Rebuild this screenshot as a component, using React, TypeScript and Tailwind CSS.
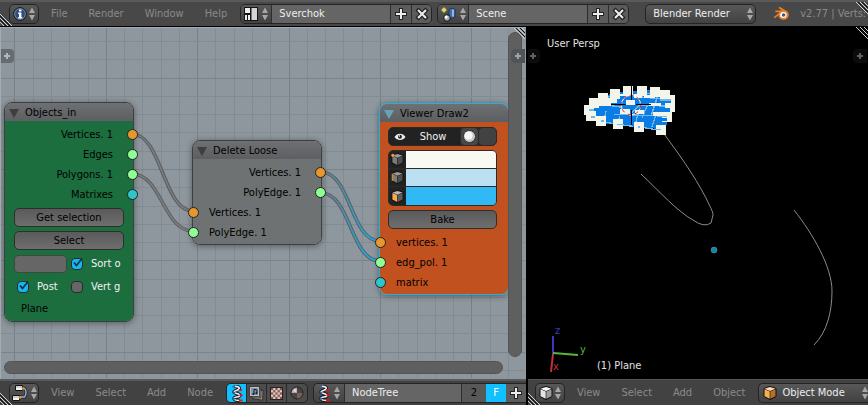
import React from "react";

const MENU = "bg-linear-to-b from-[#585858] to-[#424242]";
const PUSH = "bg-linear-to-b from-[#5a5a5a] to-[#6e6e6e]";

function Arrows({ color = "#a6a6a6" }: { color?: string }) {
  return (
    <svg width="6" height="14" viewBox="0 0 6 14" fill={color} aria-hidden="true">
      <path d="M3 0.5 6 6H0ZM3 13.5 6 8H0Z" />
    </svg>
  );
}

function Plus() {
  return (
    <svg width="14" height="14" viewBox="0 0 14 14" aria-hidden="true">
      <path d="M7 1v12M1 7h12" stroke="#222" strokeWidth="4" />
      <path d="M7 2v10M2 7h10" stroke="#eee" strokeWidth="2" />
    </svg>
  );
}

function Cross() {
  return (
    <svg width="14" height="14" viewBox="0 0 14 14" aria-hidden="true">
      <path d="M2 2l10 10M12 2 2 12" stroke="#222" strokeWidth="4.5" />
      <path d="M3 3l8 8M11 3l-8 8" stroke="#eee" strokeWidth="2" />
    </svg>
  );
}

function InfoIcon() {
  return (
    <svg width="14" height="14" viewBox="0 0 14 14" aria-hidden="true">
      <circle cx="7" cy="7" r="6.3" fill="#2f4d80" stroke="#101010" />
      <circle cx="7" cy="7" r="5.4" fill="none" stroke="#8fa5c8" strokeWidth="0.7" />
      <path d="M6 2.5h2.4v2H6zM5 5.5h3.4v4.7h1v1.3H5v-1.3h1V6.8H5z" fill="#fff" />
    </svg>
  );
}

function LayoutIcon() {
  return (
    <svg width="14" height="14" viewBox="0 0 14 14" aria-hidden="true">
      <path d="M0 0h14v14H0z" fill="#151515" />
      <path d="M1 1h5v5H1zM1 8h2v5H1zM4 8h2v5H4z" fill="#eee" />
      <path d="M7.5 1H13v12H7.5z" fill="#d5d5d5" />
    </svg>
  );
}

function SceneIcon() {
  return (
    <svg width="15" height="15" viewBox="0 0 15 15" aria-hidden="true">
      <path d="M8 3.5c0-3 6-3 6 0v6c0 2-6 2-6 0z" fill="#3c6fb8" stroke="#1b2c4a" strokeWidth="0.8" />
      <path d="M12 2.5v7" stroke="#a9c7ee" strokeWidth="1.6" />
      <circle cx="3" cy="3" r="2" fill="#f6ee80" />
      <path d="M3 0v6M0 3h6" stroke="#d8c93a" strokeWidth="0.8" />
      <circle cx="6" cy="11" r="3.3" fill="#aaa" stroke="#111" />
      <circle cx="5.2" cy="10" r="1.5" fill="#fff" />
    </svg>
  );
}

function BlenderLogo() {
  return (
    <svg width="16" height="14" viewBox="0 0 16 14" aria-hidden="true">
      <path d="M5.5 0.8 12.5 5M2 4.4h8M0.9 10.2 7 5.4" stroke="#f08022" strokeWidth="1.6" strokeLinecap="round" />
      <ellipse cx="9.6" cy="8" rx="5.2" ry="4.8" fill="#f08022" />
      <ellipse cx="9.4" cy="8" rx="3.2" ry="2.9" fill="#fff" />
      <circle cx="9.6" cy="8" r="1.8" fill="#2b5c9c" />
    </svg>
  );
}

function NodeEditorIcon() {
  return (
    <svg width="17" height="16" viewBox="0 0 17 16" aria-hidden="true">
      <path d="M10 3.5h2.500q1.500 1 1.500 4t-1.500 4.500H8" fill="none" stroke="#222" strokeWidth="3" />
      <path d="M10 3.5h2.500q1.500 1 1.500 4t-1.500 4.500H8" fill="none" stroke="#9db8e6" strokeWidth="1.4" />
      <path d="M3.500.5h7v5h-7zM.5 10.500h7v5h-7z" fill="#f2f2f2" stroke="#111" />
      <path d="M4 2h6M1 12h6" stroke="#aaa" />
      <circle cx="10.800" cy="3.500" r="1.200" fill="#e8a020" />
      <circle cx="8" cy="12.500" r="1.200" fill="#e8a020" />
    </svg>
  );
}

function HelixIcon() {
  return (
    <svg width="12" height="17" viewBox="0 0 12 17" aria-hidden="true">
      <path d="M3 1.500c4-.5 6 1 5 2.500S3 5.500 3 7s6 1.500 6 3.500-6 1-6 3 4 2 6 2" fill="none" stroke="#161616" strokeWidth="3.400" />
      <path d="M3 1.500c4-.5 6 1 5 2.500S3 5.500 3 7s6 1.500 6 3.500-6 1-6 3 4 2 6 2" fill="none" stroke="#e8eef5" strokeWidth="1.600" />
      <path d="M1.500 1.800h2.500M2 7l2 1.200M2 13l2 1.200" stroke="#3866b0" strokeWidth="1.800" />
      <path d="M8 5h3M8.500 10.300h3M8 15.500h3.500" stroke="#e01515" strokeWidth="2" />
    </svg>
  );
}

function CompositeIcon() {
  return (
    <svg width="15" height="15" viewBox="0 0 15 15" aria-hidden="true">
      <path d="M5 5l9-.5-.5 9.500-9-1z" fill="#b3aa94" stroke="#222" strokeWidth=".8" />
      <path d="M3 3h9v9H3z" fill="#9b9b9b" stroke="#222" strokeWidth=".8" />
      <path d="M.6.600h10v10H.6z" fill="#c9ccd2" stroke="#222" strokeWidth=".8" />
      <path d="M2 2h7.200v7.200H2z" fill="#8492aa" />
      <path d="M5 8V3.300l3 .8V7" fill="none" stroke="#10182a" />
      <circle cx="4.400" cy="8" r="1" fill="#10182a" />
      <circle cx="7.400" cy="7.200" r="1" fill="#10182a" />
    </svg>
  );
}

function TextureIcon() {
  const cells = [0, 1, 2, 3, 4, 5, 6, 7, 8, 9, 10, 11, 12];
  return (
    <svg width="13" height="13" viewBox="0 0 13 13" aria-hidden="true">
      <path d="M0 0h13v13H0z" fill="#2b2020" />
      <path d="M1 1h11v11H1z" fill="#d6cfcb" />
      {cells.map((n) => {
        const i = n * 2;
        return <rect key={n} x={1 + (i % 5) * 2.200} y={1 + Math.floor(i / 5) * 2.200} width="2.200" height="2.200" fill="#8d5048" />;
      })}
    </svg>
  );
}

function MaterialIcon() {
  return (
    <svg width="14" height="14" viewBox="0 0 14 14" aria-hidden="true">
      <circle cx="7" cy="7" r="6" fill="#4a4443" stroke="#222" />
      <path d="M7 7V1.500A5.500 5.500 0 0 0 1.500 7z" fill="#a9a9a9" />
      <path d="M7 7v5.500A5.500 5.500 0 0 0 12.500 7z" fill="#7c5d58" />
      <circle cx="5" cy="4.500" r="1.600" fill="#d9d9d9" />
    </svg>
  );
}

type CubeTone = { top: string; left: string; right: string };
const CUBES: Record<string, CubeTone> = {
  white: { top: "#ffffff", left: "#e4e4e4", right: "#9c9c9c" },
  orange: { top: "#ffdcae", left: "#f7ae58", right: "#b5712a" },
  gray: { top: "#9b9b9b", left: "#7b7b7b", right: "#4e4e4e" },
  face: { top: "#b9b9b9", left: "#f9aa4c", right: "#5d5d5d" },
};

function Cube({ tone, size = 14, mark }: { tone: string; size?: number; mark?: "vertex" | "edge" }) {
  const c = CUBES[tone];
  return (
    <svg width={size} height={size} viewBox="0 0 14 14" aria-hidden="true">
      <path d="M7 0.5 13 2.500v8L7 13.500 1 10.500v-8z" fill="#111" stroke="#111" strokeLinejoin="round" />
      <path d="M7 1 12.500 2.800 7 5 1.500 2.800z" fill={c.top} />
      <path d="M1.500 3.300 6.700 5.400v7.400L1.500 10.200z" fill={c.left} />
      <path d="M12.500 3.300 7.300 5.400v7.400l5.200-2.600z" fill={c.right} />
      {mark === "vertex" && <circle cx="2" cy="2.500" r="1.700" fill="#f59a35" />}
      {mark === "edge" && <path d="M1.500 3v7.500" stroke="#d98632" strokeWidth="1.600" />}
    </svg>
  );
}

function EyeIcon() {
  return (
    <svg width="12" height="8" viewBox="0 0 12 8" aria-hidden="true">
      <path d="M0.500 4C3-.5 9-.5 11.500 4 9 8 3 8 .5 4z" fill="#eee" />
      <circle cx="6" cy="3.700" r="2" fill="#222" />
      <circle cx="5.400" cy="3" r=".7" fill="#fff" />
    </svg>
  );
}

function CornerHatch({ flip = false }: { flip?: boolean }) {
  return (
    <svg width="12" height="12" viewBox="0 0 12 12" aria-hidden="true">
      <path
        d={flip ? "M0 0l12 12M0 4l8 8M0 8l4 4" : "M0 0l12 12M4 0l8 8M8 0l4 4"}
        stroke="#d0d0d0"
        strokeWidth="1"
      />
      <path d={flip ? "M0 2l10 10M0 6l6 6" : "M2 0l10 10M6 0l6 6"} stroke="#111" strokeWidth="1" />
    </svg>
  );
}

function RegionTab({ className }: { className: string }) {
  return (
    <button aria-label="Open region" className={`absolute flex size-[14px] items-center justify-center ${className}`}>
      <svg width="6" height="6" viewBox="0 0 6 6" aria-hidden="true">
        <path d="M3 0v6M0 3h6" stroke="currentColor" strokeWidth="2" />
      </svg>
    </button>
  );
}

function EditorMenu({ label, children }: { label: string; children: React.ReactNode }) {
  return (
    <button
      aria-label={label}
      className={`flex h-5 w-[30px] shrink-0 items-center justify-center gap-[2px] rounded-[5px] border border-[#242424] ${MENU}`}
    >
      {children}
      <Arrows />
    </button>
  );
}

function MenuItems({ items }: { items: string[] }) {
  return (
    <nav className="flex shrink-0 gap-px text-[#8a8a8a]">
      {items.map((item) => (
        <button key={item} className="px-[10px]">
          {item}
        </button>
      ))}
    </nav>
  );
}

function DataBlock({ label, value, icon }: { label: string; value: string; icon: React.ReactNode }) {
  return (
    <div className="flex h-5 w-48 shrink-0 overflow-hidden rounded-[5px] border border-[#242424]">
      <button aria-label={`Browse ${label}`} className={`flex w-[30px] items-center justify-center gap-1 ${MENU}`}>
        {icon}
        <Arrows />
      </button>
      <input
        aria-label={label}
        defaultValue={value}
        className="min-w-0 flex-1 border-x border-[#2d2d2d] bg-[#656565] px-[7px] text-[#eee] outline-none"
      />
      <button aria-label={`Add ${label}`} className="flex w-5 items-center justify-center bg-[#5c5c5c]">
        <Plus />
      </button>
      <button aria-label={`Remove ${label}`} className="flex w-5 items-center justify-center border-l border-[#2d2d2d] bg-[#5c5c5c]">
        <Cross />
      </button>
    </div>
  );
}

function TopBar() {
  return (
    <header className="relative flex h-[27px] shrink-0 items-center overflow-hidden border-t-2 border-b border-t-[#5a5a5a] border-b-black bg-[#484848] pl-[9px]">
      <div className="absolute bottom-0 left-0">
        <CornerHatch flip />
      </div>
      <EditorMenu label="Editor type">
        <InfoIcon />
      </EditorMenu>
      <div className="ml-[2px]">
        <MenuItems items={["File", "Render", "Window", "Help"]} />
      </div>
      <div className="ml-[3px] flex items-center gap-[5px]">
        <DataBlock label="screen layout" value="Sverchok" icon={<LayoutIcon />} />
        <DataBlock label="scene" value="Scene" icon={<SceneIcon />} />
      </div>
      <div className="relative ml-4 shrink-0">
        <select
          aria-label="Render engine"
          className={`block h-5 w-[111px] appearance-none rounded-[5px] border border-[#242424] px-[7px] text-[#eee] ${MENU}`}
        >
          <option>Blender Render</option>
        </select>
        <span className="pointer-events-none absolute top-[3px] right-[3px]">
          <Arrows />
        </span>
      </div>
      <div className="ml-[18px] shrink-0">
        <BlenderLogo />
      </div>
      <span className="ml-[10px] whitespace-nowrap text-[#8a8a8a]">v2.77 | Verts:</span>
      <div className="absolute top-0 right-0">
        <CornerHatch />
      </div>
    </header>
  );
}

const ORANGE = "bg-[#e8972f]";
const LIME = "bg-[#8fff95]";
const TEAL = "bg-[#2fc6c9]";

function SocketRow({ name, color, output = false }: { name: string; color: string; output?: boolean }) {
  return (
    <div className={`relative flex h-5 items-center px-4 ${output ? "justify-end pr-5" : ""}`}>
      {name}
      <span
        className={`absolute top-1 size-[11px] rounded-full border border-[#222] ${color} ${output ? "-right-[5px]" : "-left-[5px]"}`}
      />
    </div>
  );
}

function NodeBox({
  title,
  place,
  body,
  selected = false,
  children,
}: {
  title: string;
  place: string;
  body: string;
  selected?: boolean;
  children: React.ReactNode;
}) {
  return (
    <section
      className={`absolute w-[130px] rounded-lg border shadow-[0_1px_6px_rgba(0,0,0,0.4)] ${place} ${
        selected ? "border-[#1db1e6]" : "border-[#3d4043]"
      }`}
    >
      <h2 className="flex h-[18px] items-center gap-[6px] rounded-t-[7px] bg-linear-to-b from-[#6c6e70]/95 to-[#5a5c5e]/95 pt-[2px] pl-1 font-normal">
        <svg width="10" height="9" viewBox="0 0 10 9" aria-hidden="true">
          <path d="M0 0h10L5 9z" fill={selected ? "#69a3b8" : "#3e3e3e"} />
        </svg>
        {title}
      </h2>
      <div className={`rounded-b-[7px] ${body}`}>{children}</div>
    </section>
  );
}

function PushButton({ children }: { children: React.ReactNode }) {
  return (
    <button className={`h-[19px] w-full rounded-[5px] border border-[#2e2e2e] ${PUSH}`}>{children}</button>
  );
}

function Tick({ label, checked = false }: { label: string; checked?: boolean }) {
  return (
    <label className="flex items-center gap-2 whitespace-nowrap text-[#f2f2f2]">
      <span className="grid">
        <input
          type="checkbox"
          defaultChecked={checked}
          className="peer col-start-1 row-start-1 size-3 appearance-none rounded-[4px] border border-[#2a2a2a] bg-[#666] checked:bg-[#12b8f5]"
        />
        <svg
          width="12"
          height="12"
          viewBox="0 0 12 12"
          aria-hidden="true"
          className="pointer-events-none invisible col-start-1 row-start-1 overflow-visible peer-checked:visible"
        >
          <path d="M3 4.500 5.500 7.500 11 .5" fill="none" stroke="#1c2a30" strokeWidth="1.700" />
        </svg>
      </span>
      {label}
    </label>
  );
}

const WIRES = [
  "M132 107C162 107 163 184 193 184",
  "M132 147C162 147 163 204 193 204",
];
const LIVE_WIRES = [
  "M321 145C351 145 350 214 380 214",
  "M321 166C351 166 350 234 380 234",
];

function GridBackdrop() {
  const cols = Array.from({ length: 100 }, (_, i) => i);
  const rows = Array.from({ length: 60 }, (_, i) => i);
  return (
    <svg className="absolute inset-0 size-full" aria-hidden="true">
      <g shapeRendering="crispEdges">
        {cols.map((n) => (
          <rect key={n} x={Math.round(14.400 + n * 18.280)} y="0" width="1" height="100%" fill={n % 5 === 0 ? "#788187" : "#838c93"} />
        ))}
        {rows.map((n) => (
          <rect key={n} x="0" y={Math.round(14 + n * 18.280)} width="100%" height="1" fill={n % 5 === 2 ? "#7a8389" : "#838c93"} />
        ))}
      </g>
    </svg>
  );
}

function Wires() {
  return (
    <svg className="pointer-events-none absolute inset-0 size-full" aria-hidden="true">
      <defs>
        <linearGradient id="live" gradientUnits="userSpaceOnUse" x1="321" y1="0" x2="380" y2="0">
          <stop offset="0" stopColor="#727577" />
          <stop offset="1" stopColor="#10b6f2" />
        </linearGradient>
      </defs>
      <g fill="none">
        {[...WIRES, ...LIVE_WIRES].map((d) => (
          <path key={d} d={d} stroke="#5a5d60" strokeWidth="3.600" />
        ))}
        {WIRES.map((d) => (
          <path key={d} d={d} stroke="#7a7c7e" strokeWidth="1.600" />
        ))}
        {LIVE_WIRES.map((d) => (
          <path key={d} d={d} stroke="url(#live)" strokeWidth="1.800" />
        ))}
      </g>
    </svg>
  );
}

function ColorRow({ icon, color, label }: { icon: React.ReactNode; color: string; label: string }) {
  return (
    <div className="flex h-[18px] border-b border-[#2a2a2a] last:border-b-0">
      <span className="flex w-[17px] items-center justify-center bg-[#222]">{icon}</span>
      <button aria-label={label} className={`flex-1 ${color}`} />
    </div>
  );
}

function NodeCanvas() {
  return (
    <main className="relative min-h-0 flex-1 overflow-hidden border-t border-l border-[#a3abb1] bg-[#8e979e] text-black">
      <div className="absolute -top-px -left-px size-full">
        <GridBackdrop />
        <Wires />

        <NodeBox title="Objects_in" place="left-1 top-[75px]" body="bg-[#1a6d3d]/98 pt-1 pb-px">
          <SocketRow name="Vertices. 1" color={ORANGE} output />
          <SocketRow name="Edges" color={LIME} output />
          <SocketRow name="Polygons. 1" color={LIME} output />
          <SocketRow name="Matrixes" color={TEAL} output />
          <div className="flex flex-col gap-1 px-[9px] pt-[3px]">
            <PushButton>Get selection</PushButton>
            <PushButton>Select</PushButton>
            <div className="grid h-[19px] grid-cols-2 items-center gap-x-1">
              <input aria-label="Group" className="h-[18px] w-full min-w-0 rounded-[4px] border border-[#3a4a40] bg-[#666] px-1" />
              <Tick label="Sort o" checked />
            </div>
            <div className="grid h-[19px] grid-cols-2 items-center gap-x-1">
              <div className="pl-[3px]">
                <Tick label="Post" checked />
              </div>
              <Tick label="Vert g" />
            </div>
          </div>
          <p className="flex h-6 items-center px-4 pt-[2px]">Plane</p>
        </NodeBox>

        <NodeBox title="Delete Loose" place="left-[192px] top-[113px]" body="bg-[#6c6f70]/92 pt-1 pb-px">
          <SocketRow name="Vertices. 1" color={ORANGE} output />
          <SocketRow name="PolyEdge. 1" color={LIME} output />
          <SocketRow name="Vertices. 1" color={ORANGE} />
          <SocketRow name="PolyEdge. 1" color={LIME} />
        </NodeBox>

        <NodeBox title="Viewer Draw2" place="left-[379px] top-[76px]" selected body="bg-[#c2501c]/98 pb-px">
          <div className="flex flex-col gap-1 pt-[5px] pr-[11px] pb-1 pl-2">
            <div className="flex h-[19px] overflow-hidden rounded-[5px] border border-[#2a2a2a] bg-[#2a2a2a]">
              <button className="flex flex-1 items-center bg-[#222] pl-[5px] text-[#f2f2f2]">
                <EyeIcon />
                <span className="flex-1 text-center">Show</span>
              </button>
              <button aria-label="Shading" className="ml-px flex w-[17px] items-center justify-center rounded-[4px] bg-[#484848]">
                <svg width="13" height="13" viewBox="0 0 13 13" aria-hidden="true">
                  <circle cx="6.500" cy="6.500" r="6" fill="#c9c9c9" stroke="#333" />
                  <circle cx="5.500" cy="5.500" r="4" fill="#f7f7f7" />
                </svg>
              </button>
              <button aria-label="Transparency" className="ml-px w-[17px] rounded-[4px] bg-[#424242]" />
            </div>
            <div className="overflow-hidden rounded-[5px] border border-[#2a2a2a]">
              <ColorRow label="Vertex colour" color="bg-[#f8f9f2]" icon={<Cube tone="gray" size={13} mark="vertex" />} />
              <ColorRow label="Edge colour" color="bg-[#bbe0f1]" icon={<Cube tone="gray" size={13} mark="edge" />} />
              <ColorRow label="Face colour" color="bg-[#30b9f5]" icon={<Cube tone="face" size={13} />} />
            </div>
            <PushButton>Bake</PushButton>
          </div>
          <SocketRow name="vertices. 1" color={ORANGE} />
          <SocketRow name="edg_pol. 1" color={LIME} />
          <SocketRow name="matrix" color={TEAL} />
        </NodeBox>

        <div className="absolute top-[5px] right-[3px] bottom-[21px] w-[14px] rounded-full border border-[#50555a] bg-[#5f5f5f]" />
        <div className="absolute right-[22px] bottom-1 left-1 h-[13px] rounded-full border border-[#50555a] bg-[#5f5f5f]" />
        <RegionTab className="top-[22px] left-0 rounded-r-[4px] bg-[#666c71] text-[#b4b8bb]" />
        <RegionTab className="top-[22px] right-0 rounded-l-[4px] bg-[#515456] text-[#a0a3a5]" />
        <div className="absolute top-0 right-0">
          <CornerHatch />
        </div>
      </div>
    </main>
  );
}

function NodeFooter() {
  const tab = "flex w-5 items-center justify-center border-r border-[#2a2a2a] last:border-r-0";
  return (
    <footer className="relative flex h-[26px] shrink-0 items-center overflow-hidden border-t-2 border-[#585b5d] bg-[#424242] pl-[9px]">
      <div className="absolute bottom-0 left-0">
        <CornerHatch flip />
      </div>
      <EditorMenu label="Editor type">
        <NodeEditorIcon />
      </EditorMenu>
      <div className="ml-[2px]">
        <MenuItems items={["View", "Select", "Add", "Node"]} />
      </div>
      <div className="ml-[3px] flex h-5 shrink-0 overflow-hidden rounded-[5px] border border-[#242424] bg-[#4c4c4c]">
        <button aria-label="Sverchok nodes" className={`${tab} bg-[#10c0ff]`}>
          <HelixIcon />
        </button>
        <button aria-label="Compositing nodes" className={tab}>
          <CompositeIcon />
        </button>
        <button aria-label="Texture nodes" className={tab}>
          <TextureIcon />
        </button>
        <button aria-label="Material nodes" className={tab}>
          <MaterialIcon />
        </button>
      </div>
      <div className="ml-[5px] flex h-5 min-w-0 flex-1 overflow-hidden rounded-l-[5px] border border-r-0 border-[#242424]">
        <button aria-label="Browse node tree" className={`flex w-[30px] shrink-0 items-center justify-center gap-1 ${MENU}`}>
          <HelixIcon />
          <Arrows />
        </button>
        <input
          aria-label="Node tree"
          defaultValue="NodeTree"
          className="min-w-0 flex-1 border-x border-[#2d2d2d] bg-[#656565] px-[7px] text-[#eee] outline-none"
        />
        <button aria-label="Users" className="w-6 shrink-0 bg-[#585858] text-black">
          2
        </button>
        <button aria-label="Fake user" className="w-5 shrink-0 bg-[#10c0ff] text-white">
          F
        </button>
        <button aria-label="Add node tree" className="flex w-5 shrink-0 items-center justify-center bg-[#5c5c5c]">
          <Plus />
        </button>
      </div>
    </footer>
  );
}

/* Vertex markers on the rim of the disc, by left and top corner. */
const RIM = [
  [42, 90], [48, 108], [57, 69], [84, 54], [78, 124], [120, 42], [129, 132], [159, 33],
  [192, 141], [201, 33], [240, 36], [258, 150], [270, 45], [286, 60], [286, 82], [276, 112],
];

function Plane() {
  return (
    <g transform="translate(42 48) scale(0.3333)">
      <g shapeRendering="crispEdges">
        <path d="M60 98 85 68 140 52 170 48 270 45 300 60 300 95 290 150 270 162 190 155 95 145 62 120z" fill="#0a7ce6" />
        <path
          d="M60 105 90 90 122 92M84 78h26M98 72l24-9h24M152 96 110 90M108 108l-6 34M132 118l150 5M150 124l-10 26M202 124l-6 24M182 118l26-28 92 4M232 92l-16 36M212 66l70 6M262 66l-18 54M256 124l-10 32M212 54l50 2M64 126l24 6M93 138l36 8M140 148l50 6M222 158l50 8M142 60h50"
          fill="none"
          stroke="#72b9e8"
          strokeWidth="4"
        />
        <path
          d="M110 70h30v15h-30zM88 84h36v9H88zM168 74h28v16h-28zM150 101h29v15h-29zM194 106h28v12h-28zM248 110h40v13h-40zM192 58h24v11h-24zM222 60h32v8h-32zM236 84h36v8h-36zM140 56h20v6h-20z"
          fill="#f4f5ea"
        />
        {RIM.map(([x, y]) => (
          <rect key={`${x}-${y}`} x={x} y={y} width="29" height="29" fill="#f4f5ea" />
        ))}
        <path d="M56 105h16M64 126h12M93 138h10M142 148h17M270 75h32M270 101h30M260 124h30M258 163h14" stroke="#72b9e8" strokeWidth="4" />
        <path d="M264 78h38v6h-38zM262 98h38v12h-38zM258 128h32v10h-32z" fill="#0a7ce6" />
        <path d="M204 153h6v6h-6z" fill="#72b9e8" />
      </g>
      <circle cx="183" cy="90" r="29" fill="none" stroke="#fff" strokeWidth="3" />
      <circle cx="183" cy="90" r="29" fill="none" stroke="#f01010" strokeWidth="3" strokeDasharray="11 11" />
      <path d="M184.500 33v42M184.500 105v45M123 88.500h44M198 88.500h45" stroke="#000" strokeWidth="3" />
    </g>
  );
}

function Viewport() {
  return (
    <main className="relative min-h-0 flex-1 overflow-hidden bg-black text-[#e2e2e2]">
      <svg className="absolute inset-0 size-full" role="img" aria-label="3D view">
        <g fill="none" stroke="#8c8c8c" strokeWidth="1">
          <path d="M133 103C149 124 166 148 178 171C182 180 185 184 185 188L183 196Q176 201 165 193C150 185 132 165 113 147" />
          <path d="M266 183C285 207 304 240 304 264C304 285 299 305 286 318" />
        </g>
        <Plane />
        <circle cx="186" cy="223" r="3" fill="#0c86b8" stroke="#6b7a80" strokeWidth="0.800" />
        <g fill="none" strokeWidth="2">
          <path d="M25 309v18" stroke="#3838c0" />
          <path d="M25 326l25 2" stroke="#56b83a" />
          <path d="M25 327l-2 18" stroke="#c03434" />
        </g>
        <text x="27" y="307" fontSize="11" fill="#3c3cc4">z</text>
        <text x="52" y="326" fontSize="11" fill="#56b83a">y</text>
        <text x="25" y="343" fontSize="11" fill="#c03434">x</text>
      </svg>
      <p className="absolute top-[10px] left-[19px]">User Persp</p>
      <p className="absolute bottom-[6px] left-[69px]">(1) Plane</p>
      <RegionTab className="top-[22px] -left-[2px] rounded-r-[4px] bg-[#0c0c0c] text-[#606060]" />
      <RegionTab className="top-[22px] right-px rounded-l-[4px] bg-[#0c0c0c] text-[#606060]" />
      <div className="absolute top-0 right-0">
        <CornerHatch />
      </div>
    </main>
  );
}

function ViewFooter() {
  return (
    <footer className="relative flex h-[26px] shrink-0 items-center overflow-hidden border-t border-[#555] bg-[#424242] pl-[7px]">
      <div className="absolute bottom-0 left-0">
        <CornerHatch flip />
      </div>
      <EditorMenu label="Editor type">
        <Cube tone="white" />
      </EditorMenu>
      <div className="ml-[2px]">
        <MenuItems items={["View", "Select", "Add", "Object"]} />
      </div>
      <div className="relative ml-[3px] min-w-0 flex-1">
        <span className="pointer-events-none absolute top-[3px] left-[5px]">
          <Cube tone="orange" />
        </span>
        <select
          aria-label="Interaction mode"
          className={`block h-5 w-full appearance-none rounded-l-[5px] border border-r-0 border-[#242424] pr-3 pl-[23px] text-[#eee] ${MENU}`}
        >
          <option>Object Mode</option>
        </select>
        <span className="pointer-events-none absolute top-[3px] right-0">
          <Arrows />
        </span>
      </div>
    </footer>
  );
}

export default function App() {
  return (
    <div className="flex h-screen flex-col overflow-hidden bg-[#424242] font-['DejaVu_Sans_Condensed','DejaVu_Sans',sans-serif] text-[11px] leading-[14px]">
      <TopBar />
      <div className="grid min-h-0 flex-1 grid-cols-[528fr_340fr]">
        <div className="flex min-h-0 min-w-0 flex-col border-r-2 border-black">
          <NodeCanvas />
          <NodeFooter />
        </div>
        <div className="flex min-h-0 min-w-0 flex-col">
          <Viewport />
          <ViewFooter />
        </div>
      </div>
    </div>
  );
}
